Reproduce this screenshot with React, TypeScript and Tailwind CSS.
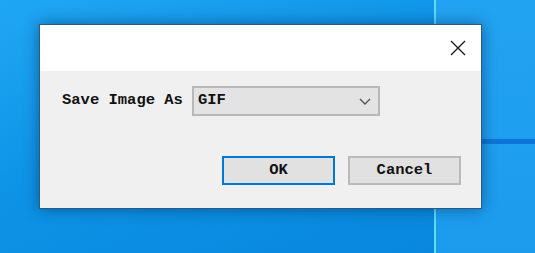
export default function App() {
  return (
    <div className="relative h-[253px] w-[535px] overflow-hidden bg-[linear-gradient(160deg,#1fa6f3_0%,#0d93e6_45%,#0785dc_100%)] font-['Liberation_Mono',monospace]">
      {/* WALLPAPER BEAMS */}
      <div className="absolute left-[436px] top-0 h-full w-[99px] bg-[linear-gradient(180deg,#22a3f1_0%,#1c9bed_100%)]" />
      <div className="absolute left-[434px] top-0 h-full w-[2px] bg-[#5ddcf7]" />
      <div className="absolute left-[436px] top-[139px] h-[5px] w-[99px] bg-[#0b76d6]" />

      {/* DIALOG */}
      <div className="absolute left-[39px] top-[24px] flex h-[185px] w-[443px] flex-col border border-[#2b5b80] bg-[#f0f0f0] shadow-[0_0_14px_rgba(0,20,60,0.45)]">
        <div className="flex h-[46px] items-center justify-end bg-white pr-[15px]">
          <svg width="16" height="16" viewBox="0 0 16 16" className="text-[#1a1a1a]">
            <path d="M1 1 L15 15 M15 1 L1 15" stroke="currentColor" strokeWidth="1.4" fill="none" />
          </svg>
        </div>

        <div className="flex flex-1 flex-col px-[20px]">
          <div className="mt-[15px] flex items-center">
            <span className="ml-[2px] text-[15.5px] font-bold text-[#111]">Save Image As</span>
            <div className="ml-[9px] flex h-[30px] w-[188px] items-center justify-between border-2 border-[#b8b8b8] bg-[#e3e3e3] pl-[4px] pr-[7px]">
              <span className="text-[15.5px] font-bold text-[#111]">GIF</span>
              <svg width="12" height="7" viewBox="0 0 12 7" className="text-[#555]">
                <path d="M1 1 L6 6 L11 1" stroke="currentColor" strokeWidth="1.4" fill="none" />
              </svg>
            </div>
          </div>

          <div className="mt-[40px] flex justify-end gap-[13px]">
            <button className="h-[29px] w-[113px] border-2 border-[#0078d7] bg-[#e1e1e1] text-[15.5px] font-bold text-[#111]">
              OK
            </button>
            <button className="h-[29px] w-[113px] border-2 border-[#bababa] bg-[#e1e1e1] text-[15.5px] font-bold text-[#111]">
              Cancel
            </button>
          </div>
        </div>
      </div>
    </div>
  )
}
